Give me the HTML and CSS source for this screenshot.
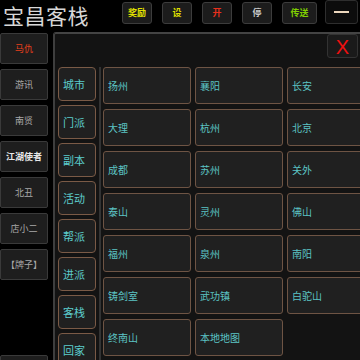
FILE: index.html
```html
<!doctype html>
<html lang="zh">
<head>
    <meta charset="UTF-8">
    <title>宝昌客栈</title>
    <link rel="stylesheet" href="styles.css">
</head>
<body>
<div class="top">
    <div class="title">宝昌客栈</div>
    <div class="btns">
        <div class="btn yellow">奖励</div>
        <div class="btn yellow">设</div>
        <div class="btn red">开</div>
        <div class="btn grey">停</div>
        <div class="btn green wide">传送</div>
    </div>
    <div class="min"><span></span></div>
</div>
<div class="main">
    <div class="side">
        <div class="npc hot">马仇</div>
        <div class="npc">游讯</div>
        <div class="npc">南贤</div>
        <div class="npc bright">江湖使者</div>
        <div class="npc">北丑</div>
        <div class="npc">店小二</div>
        <div class="npc">【牌子】</div>
        <div class="npc last"></div>
    </div>
    <div class="panel">
        <div class="panel-head">
            <div class="close">X</div>
        </div>
        <div class="panel-body">
            <div class="tabs">
                <div class="tab">城市</div>
                <div class="tab">门派</div>
                <div class="tab">副本</div>
                <div class="tab">活动</div>
                <div class="tab">帮派</div>
                <div class="tab">进派</div>
                <div class="tab">客栈</div>
                <div class="tab">回家</div>
            </div>
            <div class="line"></div>
            <div class="grid">
                <div class="cell">扬州</div>
                <div class="cell">襄阳</div>
                <div class="cell">长安</div>
                <div class="cell">大理</div>
                <div class="cell">杭州</div>
                <div class="cell">北京</div>
                <div class="cell">成都</div>
                <div class="cell">苏州</div>
                <div class="cell">关外</div>
                <div class="cell">泰山</div>
                <div class="cell">灵州</div>
                <div class="cell">佛山</div>
                <div class="cell">福州</div>
                <div class="cell">泉州</div>
                <div class="cell">南阳</div>
                <div class="cell">铸剑室</div>
                <div class="cell">武功镇</div>
                <div class="cell">白驼山</div>
                <div class="cell">终南山</div>
                <div class="cell">本地地图</div>
            </div>
        </div>
    </div>
</div>
</body>
</html>
```

FILE: styles.css
```css
*{
    padding: 0;
    margin: 0;
    box-sizing: border-box;
}
body{
    background: #000;
    width: 360px;
    height: 360px;
    overflow: hidden;
    font-family: "Noto Sans CJK SC", "Noto Sans", sans-serif;
}
.top{
    height: 32px;
    display: flex;
    align-items: flex-start;
}
.title{
    flex: none;
    margin: 1px 0 0 3px;
    font-size: 21px;
    line-height: 28px;
    color: #d8d8d8;
    letter-spacing: 0.5px;
    width: 119px;
}
.btns{
    display: flex;
    gap: 10px;
    margin-top: 2px;
}
.btn{
    flex: none;
    width: 30px;
    height: 22px;
    line-height: 20px;
    text-align: center;
    font-size: 9px;
    font-weight: bold;
    background: #1c1c1c;
    border: 1px solid #3c3c3c;
    border-radius: 3px;
}
.btn.wide{
    width: 35px;
}
.yellow{ color: #e0e000; }
.red{ color: #e8301c; }
.grey{ color: #c8c8c8; }
.green{ color: #80d000; }
.min{
    flex: none;
    width: 33px;
    height: 24px;
    margin-left: 8px;
    background: #0c0c0c;
    border: 1px solid #2e2e2e;
    border-radius: 3px;
    display: flex;
    align-items: center;
    justify-content: center;
}
.min span{
    width: 15px;
    height: 2px;
    background: #ecd6bc;
}
.main{
    display: flex;
    height: 328px;
    overflow: hidden;
}
.side{
    flex: none;
    width: 48px;
    padding-top: 1px;
    display: flex;
    flex-direction: column;
    gap: 5px;
}
.npc{
    flex: none;
    height: 31px;
    line-height: 29px;
    text-align: center;
    font-size: 9px;
    white-space: nowrap;
    color: #a8a8a8;
    background: #1e1e1e;
    border: 1px solid #3a3a3a;
    border-radius: 2px;
}
.npc.hot{
    color: #e8401c;
}
.npc.bright{
    color: #e8e8e8;
    font-weight: bold;
}
.npc.last{
    margin-top: 70px;
}
.panel{
    flex: 1;
    min-width: 0;
    margin-left: 5px;
    height: 330px;
    background: #131313;
    border-left: 2px solid #3e3e3e;
    border-top: 2px solid #444;
    border-radius: 3px 0 0 0;
    overflow: hidden;
}
.panel-head{
    height: 33px;
    display: flex;
    justify-content: flex-end;
    padding: 0 2px 0 0;
}
.close{
    width: 31px;
    height: 24px;
    line-height: 24px;
    text-align: center;
    font-size: 20px;
    color: #ee1010;
    background: #1a1a1a;
    border: 1px solid #333;
    border-radius: 3px;
    font-family: "Liberation Sans", sans-serif;
}
.panel-body{
    display: flex;
}
.tabs{
    flex: none;
    width: 38px;
    margin-left: 3px;
    display: flex;
    flex-direction: column;
    gap: 4px;
}
.tab{
    flex: none;
    height: 34px;
    line-height: 32px;
    padding-left: 4px;
    font-size: 11px;
    color: #5ccccc;
    background: #202020;
    border: 1.5px solid #7a5a46;
    border-radius: 4px;
}
.line{
    flex: none;
    width: 2px;
    height: 300px;
    margin-left: 3px;
    background: #333;
}
.grid{
    flex: none;
    margin-left: 2px;
    display: grid;
    grid-template-columns: 88px 88px 88px;
    grid-auto-rows: 37px;
    gap: 5px 4px;
}
.cell{
    line-height: 35px;
    padding-left: 4px;
    font-size: 10px;
    color: #5cc4c4;
    background: #202020;
    border: 1px solid #6e5444;
    border-radius: 3px;
}
```
